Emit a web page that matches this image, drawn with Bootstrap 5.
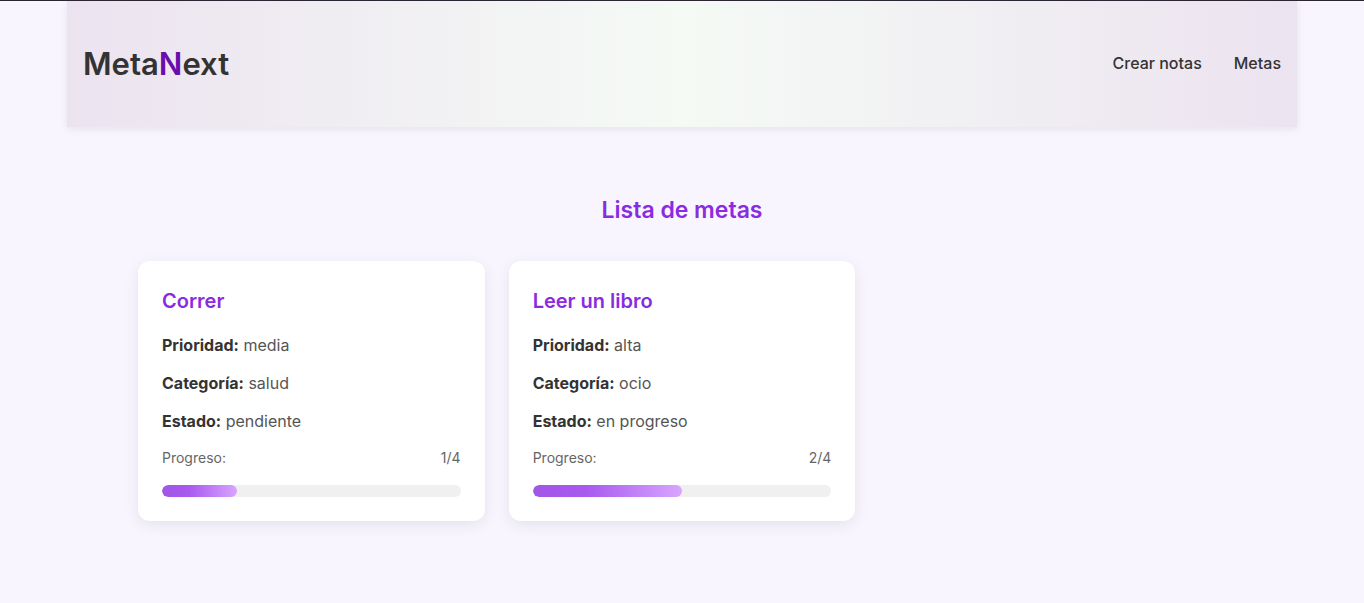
<!DOCTYPE html>
<html lang="es">
<head>
<meta charset="utf-8">
<meta name="viewport" content="width=device-width, initial-scale=1">
<title>MetaNext</title>
<link href="https://cdn.jsdelivr.net/npm/bootstrap@5.3.0/dist/css/bootstrap.min.css" rel="stylesheet">
<style>
body { font-family: Inter, "Liberation Sans", sans-serif; background: #f8f5ff; color: #333; border-top: 1px solid #2b2533; }
.page { width: calc(100% - 134px); }
.site-header { min-height: 126px; background: linear-gradient(90deg, #ece3f0, #f5faf5 50%, #ece3f0); box-shadow: 0 2px 8px rgba(0,0,0,.08); }
.brand { font-size: 31px; line-height: 40px; font-weight: 600; color: #333; }
.brand span { color: #6a0dad; }
.site-nav { gap: 32px; padding-bottom: 2px; }
.site-link { font-weight: 500; line-height: 24px; color: #333; }
.goals { max-width: 1088px; padding: 64px 0; }
.goals-title { font-size: 23px; line-height: 38px; font-weight: 600; color: #8a2be2; margin-bottom: 32px; }
.goal { border: 0; border-radius: 12px; padding: 24px; box-shadow: 0 4px 15px rgba(0,0,0,.08); color: #555; }
.goal h2 { font-size: 20px; line-height: 32px; font-weight: 600; color: #8a2be2; margin-bottom: 16px; }
.goal p { line-height: 24px; margin-bottom: 14px; }
.goal strong { color: #333; font-weight: 700; }
.goal-count { font-size: 14px; line-height: 22px; color: #666; }
.goal .progress { height: 12px; background: #f0f0f0; border-radius: 10px; }
.goal .progress-bar { border-radius: 10px; background: linear-gradient(90deg, #a056e6, #a859ee 35%, #d8a5ff); }
</style>
</head>
<body>
<div class="page mx-auto">
  <header class="site-header d-flex flex-wrap justify-content-between align-items-center px-3">
    <a href="#" class="brand text-decoration-none">Meta<span>N</span>ext</a>
    <nav class="site-nav d-flex">
      <a href="#" class="site-link text-decoration-none">Crear notas</a>
      <a href="#" class="site-link text-decoration-none">Metas</a>
    </nav>
  </header>
  <main class="goals mx-auto">
    <h1 class="goals-title text-center">Lista de metas</h1>
    <div class="row row-cols-1 row-cols-md-2 row-cols-lg-3 g-4">
      <div class="col"><article class="card goal">
        <h2>Correr</h2>
        <p><strong>Prioridad:</strong> media</p>
        <p><strong>Categoría:</strong> salud</p>
        <p><strong>Estado:</strong> pendiente</p>
        <div class="goal-count d-flex justify-content-between mb-3"><span>Progreso:</span><span>1/4</span></div>
        <div class="progress" role="progressbar" aria-label="Progreso de Correr" aria-valuenow="1" aria-valuemin="0" aria-valuemax="4"><div class="progress-bar" style="width:25%"></div></div>
      </article></div>
      <div class="col"><article class="card goal">
        <h2>Leer un libro</h2>
        <p><strong>Prioridad:</strong> alta</p>
        <p><strong>Categoría:</strong> ocio</p>
        <p><strong>Estado:</strong> en progreso</p>
        <div class="goal-count d-flex justify-content-between mb-3"><span>Progreso:</span><span>2/4</span></div>
        <div class="progress" role="progressbar" aria-label="Progreso de Leer un libro" aria-valuenow="2" aria-valuemin="0" aria-valuemax="4"><div class="progress-bar" style="width:50%"></div></div>
      </article></div>
    </div>
  </main>
</div>
<script src="https://cdn.jsdelivr.net/npm/bootstrap@5.3.0/dist/js/bootstrap.bundle.min.js"></script>
</body>
</html>
